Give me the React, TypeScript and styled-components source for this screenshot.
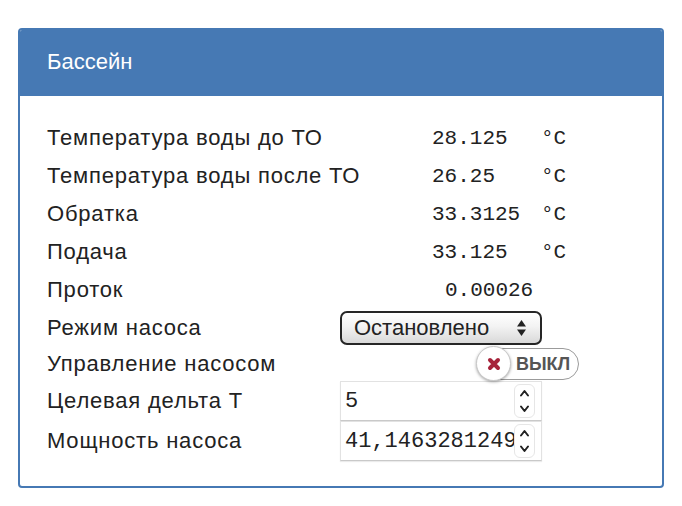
import React from 'react';
import styled, { createGlobalStyle } from 'styled-components';

const GlobalStyle = createGlobalStyle`
  html, body {
    margin: 0;
    padding: 0;
    background: #ffffff;
  }
  body {
    font-family: "Liberation Sans", Arial, sans-serif;
    color: #222222;
  }
`;

const Page = styled.div`
  padding: 28px 0 0 18px;
`;

const Panel = styled.section`
  width: 646px;
  height: 460px;
  box-sizing: border-box;
  border: 2px solid #4679b4;
  border-radius: 4px;
  overflow: hidden;
  display: flex;
  flex-direction: column;
`;

const PanelHeader = styled.header`
  height: 66px;
  background: #4679b4;
  color: #ffffff;
  font-size: 22px;
  display: flex;
  align-items: center;
  padding-left: 27px;
  padding-bottom: 2px;
  box-sizing: border-box;
`;

const PanelBody = styled.div`
  padding: 23px 0 0 27px;
  display: flex;
  flex-direction: column;
`;

const Row = styled.div<{ $h?: number }>`
  display: grid;
  grid-template-columns: 293px 1fr;
  align-items: center;
  height: ${({ $h }) => $h || 38}px;
`;

const Label = styled.div`
  font-size: 22px;
  letter-spacing: 0.8px;
  white-space: nowrap;
`;

const ValueCell = styled.div<{ $offset?: number }>`
  display: flex;
  align-items: center;
  padding-left: ${({ $offset }) => $offset ?? 92}px;
  font-family: "Liberation Mono", "Courier New", monospace;
  font-size: 21px;
  color: #222;
`;

const Value = styled.span`
  width: 109px;
`;

const Unit = styled.span`
  font-size: 21px;
`;

const Select = styled.div`
  width: 202px;
  height: 34px;
  box-sizing: border-box;
  border: 2px solid #262626;
  border-radius: 7px;
  background: linear-gradient(#ffffff 0%, #f3f3f3 45%, #d9d9d9 100%);
  box-shadow: inset 0 1px 1px rgba(255, 255, 255, 0.9);
  display: flex;
  align-items: center;
  justify-content: space-between;
  padding: 0 13px 0 12px;
  font-size: 22px;
  color: #222;
`;

const ToggleCell = styled.div`
  display: flex;
  padding-left: 137px;
`;

const Toggle = styled.div`
  position: relative;
  width: 102px;
  height: 32px;
  box-sizing: border-box;
  border: 1.5px solid #9b9b9b;
  border-radius: 16px;
  background: #fff;
  display: flex;
  align-items: center;
  padding-left: 38px;
  font-size: 18px;
  font-weight: bold;
  color: #555;
`;

const Knob = styled.span`
  position: absolute;
  left: -2px;
  top: -3px;
  width: 35px;
  height: 35px;
  box-sizing: border-box;
  border-radius: 50%;
  background: #fff;
  border: 1px solid #c8c8c8;
  box-shadow: 0 1px 3px rgba(0, 0, 0, 0.35);
  display: flex;
  align-items: center;
  justify-content: center;
`;

const NumberBox = styled.div`
  width: 202px;
  height: 40px;
  box-sizing: border-box;
  border: 1px solid #e2e2e2;
  border-bottom: 1px solid #c9c9c9;
  box-shadow: 0 1px 1px rgba(0, 0, 0, 0.08);
  display: flex;
  align-items: center;
  justify-content: space-between;
  padding: 0 6px 0 4px;
  font-family: "Liberation Mono", "Courier New", monospace;
  font-size: 22px;
  color: #222;
  background: #fff;
`;

const Spin = styled.span`
  width: 21px;
  height: 34px;
  box-sizing: border-box;
  border: 1px solid #e6e6e6;
  border-radius: 6px;
  background: #fff;
  display: flex;
  flex-direction: column;
  align-items: center;
  justify-content: space-around;
  margin-left: -6px;
`;

const SelectArrows = () => (
  <svg width="11" height="18" viewBox="0 0 11 18">
    <path d="M5.5 1 L10 7.5 H1 Z" fill="#222" />
    <path d="M5.5 17 L10 10.5 H1 Z" fill="#222" />
  </svg>
);

const Chevron = ({ up }: { up?: boolean }) => (
  <svg width="11" height="8" viewBox="0 0 11 8">
    <path
      d={up ? 'M2 6.5 L5.5 2 L9 6.5' : 'M2 1.5 L5.5 6 L9 1.5'}
      fill="none"
      stroke="#222"
      strokeWidth="2"
      strokeLinecap="round"
      strokeLinejoin="round"
    />
  </svg>
);

const CrossIcon = () => (
  <svg width="14" height="14" viewBox="0 0 14 14">
    <path d="M3 3 L11 11 M11 3 L3 11" stroke="#a6233a" strokeWidth="4" strokeLinecap="round" />
  </svg>
);

const readings = [
  { label: 'Температура воды до ТО', value: '28.125', unit: '°C' },
  { label: 'Температура воды после ТО', value: '26.25', unit: '°C' },
  { label: 'Обратка', value: '33.3125', unit: '°C' },
  { label: 'Подача', value: '33.125', unit: '°C' },
];

const NumberInput = ({ value }: { value: string }) => (
  <NumberBox>
    <span>{value}</span>
    <Spin>
      <Chevron up />
      <Chevron />
    </Spin>
  </NumberBox>
);

export default function App() {
  return (
    <Page>
      <GlobalStyle />
      <Panel>
        <PanelHeader>Бассейн</PanelHeader>
        <PanelBody>
          {readings.map((r) => (
            <Row key={r.label}>
              <Label>{r.label}</Label>
              <ValueCell>
                <Value>{r.value}</Value>
                <Unit>{r.unit}</Unit>
              </ValueCell>
            </Row>
          ))}
          <Row>
            <Label>Проток</Label>
            <ValueCell $offset={105}>
              <Value>0.00026</Value>
            </ValueCell>
          </Row>
          <Row>
            <Label>Режим насоса</Label>
            <div>
              <Select>
                <span>Остановлено</span>
                <SelectArrows />
              </Select>
            </div>
          </Row>
          <Row $h={34}>
            <Label>Управление насосом</Label>
            <ToggleCell>
              <Toggle>
                <Knob>
                  <CrossIcon />
                </Knob>
                ВЫКЛ
              </Toggle>
            </ToggleCell>
          </Row>
          <Row $h={40}>
            <Label>Целевая дельта T</Label>
            <div>
              <NumberInput value="5" />
            </div>
          </Row>
          <Row $h={40}>
            <Label>Мощность насоса</Label>
            <div>
              <NumberInput value="41,1463281249" />
            </div>
          </Row>
        </PanelBody>
      </Panel>
    </Page>
  );
}
